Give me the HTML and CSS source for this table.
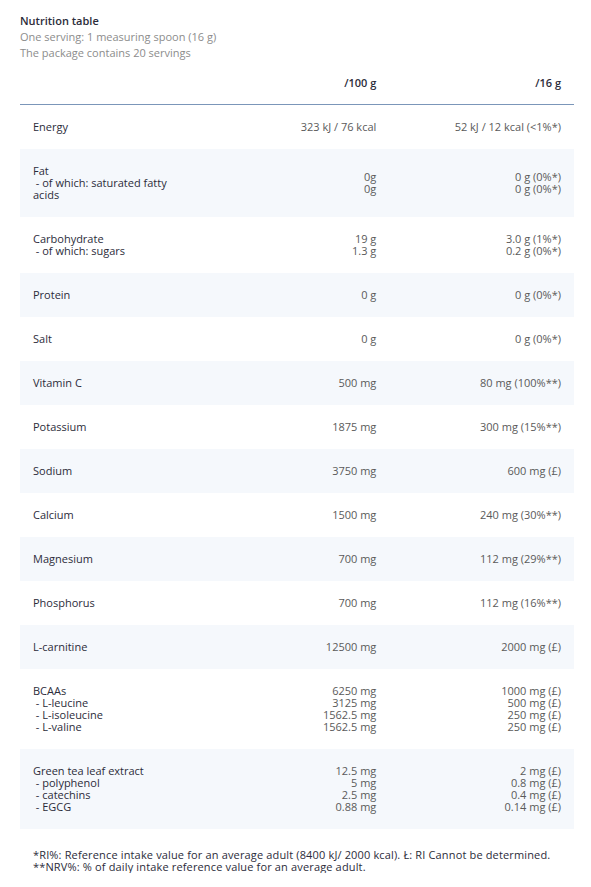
FILE: index.html
```html
<!DOCTYPE html>
<html lang="en">
<head>
<meta charset="utf-8">
<title>Nutrition table</title>
<link rel="stylesheet" href="styles.css">
</head>
<body>
<div class="page">
  <div class="intro">
    <div class="title">Nutrition table</div>
    <div class="sub">One serving: 1 measuring spoon (16 g)</div>
    <div class="sub">The package contains 20 servings</div>
  </div>
  <table class="nutrition">
    <thead>
      <tr><th class="lbl"></th><th class="val">/100 g</th><th class="val">/16 g</th></tr>
    </thead>
    <tbody>
      <tr><td class="lbl">Energy</td><td class="val">323 kJ / 76 kcal</td><td class="val">52 kJ / 12 kcal (&lt;1%*)</td></tr>
      <tr class="alt"><td class="lbl">Fat<br>&nbsp;- of which: saturated fatty acids</td><td class="val">0g<br>0g</td><td class="val">0 g (0%*)<br>0 g (0%*)</td></tr>
      <tr><td class="lbl">Carbohydrate<br>&nbsp;- of which: sugars</td><td class="val">19 g<br>1.3 g</td><td class="val">3.0 g (1%*)<br>0.2 g (0%*)</td></tr>
      <tr class="alt"><td class="lbl">Protein</td><td class="val">0 g</td><td class="val">0 g (0%*)</td></tr>
      <tr><td class="lbl">Salt</td><td class="val">0 g</td><td class="val">0 g (0%*)</td></tr>
      <tr class="alt"><td class="lbl">Vitamin C</td><td class="val">500 mg</td><td class="val">80 mg (100%**)</td></tr>
      <tr><td class="lbl">Potassium</td><td class="val">1875 mg</td><td class="val">300 mg (15%**)</td></tr>
      <tr class="alt"><td class="lbl">Sodium</td><td class="val">3750 mg</td><td class="val">600 mg (£)</td></tr>
      <tr><td class="lbl">Calcium</td><td class="val">1500 mg</td><td class="val">240 mg (30%**)</td></tr>
      <tr class="alt"><td class="lbl">Magnesium</td><td class="val">700 mg</td><td class="val">112 mg (29%**)</td></tr>
      <tr><td class="lbl">Phosphorus</td><td class="val">700 mg</td><td class="val">112 mg (16%**)</td></tr>
      <tr class="alt"><td class="lbl">L-carnitine</td><td class="val">12500 mg</td><td class="val">2000 mg (£)</td></tr>
      <tr><td class="lbl">BCAAs<br>&nbsp;- L-leucine<br>&nbsp;- L-isoleucine<br>&nbsp;- L-valine</td><td class="val">6250 mg<br>3125 mg<br>1562.5 mg<br>1562.5 mg</td><td class="val">1000 mg (£)<br>500 mg (£)<br>250 mg (£)<br>250 mg (£)</td></tr>
      <tr class="alt"><td class="lbl">Green tea leaf extract<br>&nbsp;- polyphenol<br>&nbsp;- catechins<br>&nbsp;- EGCG</td><td class="val">12.5 mg<br>5 mg<br>2.5 mg<br>0.88 mg</td><td class="val">2 mg (£)<br>0.8 mg (£)<br>0.4 mg (£)<br>0.14 mg (£)</td></tr>
    </tbody>
  </table>
  <div class="notes">
    <div>*RI%: Reference intake value for an average adult (8400 kJ/ 2000 kcal). Ł: RI Cannot be determined.</div>
    <div>**NRV%: % of daily intake reference value for an average adult.</div>
  </div>
</div>
</body>
</html>
```
FILE: styles.css
```css
html, body {
  margin: 0;
  padding: 0;
  background: #ffffff;
}
body {
  font-family: "Open Sans", "Noto Sans", sans-serif;
  font-size: 11px;
  color: #2c2c3a;
}
.page {
  padding: 13px 17px 0 20px;
}
.intro {
  line-height: 16px;
}
.title {
  font-weight: 600;
  color: #2c2c3a;
}
.sub {
  color: #8c8c8c;
}
.nutrition {
  width: 554px;
  table-layout: fixed;
  border-collapse: collapse;
  border-spacing: 0;
  line-height: 12px;
}
.nutrition th {
  font-weight: 600;
  color: #2c2c3a;
  padding: 16px 13px 15px;
  border-bottom: 1px solid #7b96b9;
}
.nutrition td {
  padding: 16px 13px;
  vertical-align: middle;
}
.nutrition .lbl {
  text-align: left;
  color: #2c2c3a;
}
.nutrition td.lbl {
  font-weight: 500;
}
.nutrition td.val {
  text-align: right;
  color: #5a5a5a;
}
.nutrition th.val {
  text-align: right;
}
.nutrition tr.alt td {
  background: #f5f8fc;
}
.notes {
  margin-top: 20px;
  padding-left: 13px;
  line-height: 12px;
  font-size: 11px;
  letter-spacing: 0.15px;
  color: #2c2c3a;
}
```
